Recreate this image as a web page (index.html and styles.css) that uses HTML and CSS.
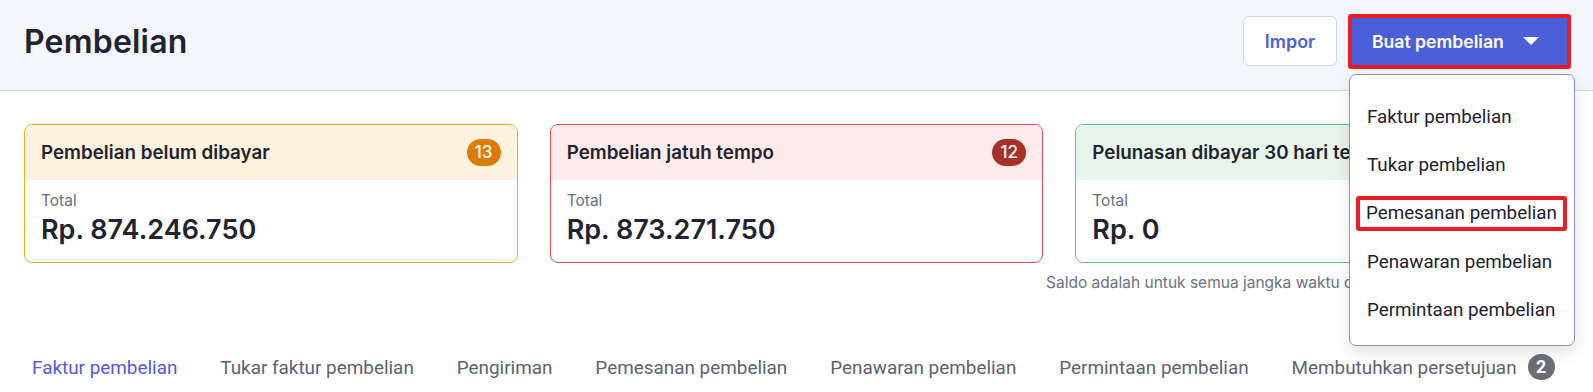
FILE: index.html
```html
<!DOCTYPE html>
<html lang="id">
<head>
    <meta charset="UTF-8">
    <meta name="viewport" content="width=device-width, initial-scale=1.0">
    <title>Pembelian</title>
    <link rel="stylesheet" href="styles.css">
</head>
<body>

    <div class="page-header">
        <h1>Pembelian</h1>
        <div class="actions">
            <button class="btn-import">Impor</button>
            <div class="create-wrap">
                <button class="btn-create">
                    Buat pembelian
                    <svg class="caret" width="16" height="8" viewBox="0 0 16 8"><path d="M0 0 H16 L8 8 Z" fill="#fff"/></svg>
                </button>
                <ul class="dropdown">
                    <li>Faktur pembelian</li>
                    <li>Tukar pembelian</li>
                    <li><span class="marked">Pemesanan pembelian</span></li>
                    <li>Penawaran pembelian</li>
                    <li>Permintaan pembelian</li>
                </ul>
            </div>
        </div>
    </div>

    <div class="summary">
        <div class="card card-yellow">
            <div class="card-head">
                <span>Pembelian belum dibayar</span>
                <span class="count">13</span>
            </div>
            <div class="card-body">
                <div class="label">Total</div>
                <div class="amount">Rp. 874.246.750</div>
            </div>
        </div>
        <div class="card card-red">
            <div class="card-head">
                <span>Pembelian jatuh tempo</span>
                <span class="count">12</span>
            </div>
            <div class="card-body">
                <div class="label">Total</div>
                <div class="amount">Rp. 873.271.750</div>
            </div>
        </div>
        <div class="card card-green">
            <div class="card-head">
                <span>Pelunasan dibayar 30 hari terakhir</span>
            </div>
            <div class="card-body">
                <div class="label">Total</div>
                <div class="amount">Rp. 0</div>
            </div>
        </div>
    </div>
    <p class="note">Saldo adalah untuk semua jangka waktu dalam mata uang dasar (IDR)</p>

    <div class="tabs">
        <a class="tab active">Faktur pembelian</a>
        <a class="tab">Tukar faktur pembelian</a>
        <a class="tab">Pengiriman</a>
        <a class="tab">Pemesanan pembelian</a>
        <a class="tab">Penawaran pembelian</a>
        <a class="tab">Permintaan pembelian</a>
        <a class="tab">Membutuhkan persetujuan <span class="tab-count">2</span></a>
    </div>

</body>
</html>
```

FILE: styles.css
```css
body {
    font-family: Inter, "Noto Sans", sans-serif;
    background-color: #fff;
    color: #1f2430;
    margin: 0;
    padding: 0;
}
.page-header {
    display: flex;
    align-items: center;
    justify-content: space-between;
    height: 91px;
    box-sizing: border-box;
    padding: 0 22px 8px 24px;
    background-color: #f3f6fa;
    border-bottom: 1px solid #d5dae3;
}
h1 {
    margin: 0;
    font-size: 32px;
    font-weight: 600;
    letter-spacing: 0.2px;
}
.actions {
    display: flex;
    align-items: center;
    gap: 11px;
}
.btn-import {
    width: 94px;
    height: 50px;
    background-color: #fff;
    border: 1px solid #d3d8e0;
    border-radius: 6px;
    color: #4c5fdb;
    font-family: inherit;
    font-size: 18px;
    font-weight: 600;
}
.create-wrap {
    position: relative;
}
.btn-create {
    display: flex;
    align-items: center;
    gap: 19px;
    width: 223px;
    height: 55px;
    padding: 0 0 0 20px;
    background-color: #4c5fdb;
    border: 4px solid #ec1c24;
    border-radius: 3px;
    color: #fff;
    font-family: inherit;
    font-size: 17.6px;
    font-weight: 600;
}
.dropdown {
    position: absolute;
    top: 60px;
    left: 1px;
    width: 226px;
    box-sizing: border-box;
    margin: 0;
    padding: 18px 0 11px;
    list-style: none;
    background-color: #fff;
    border: 1px solid #8b93a5;
    border-radius: 7px;
    box-shadow: 0 6px 16px rgba(0,0,0,0.12);
    z-index: 5;
}
.dropdown li {
    display: flex;
    align-items: center;
    height: 48.4px;
    padding-left: 17px;
    font-family: Roboto, sans-serif;
    font-size: 18.8px;
    color: #1d2231;
}
.dropdown .marked {
    display: inline-block;
    margin-left: -11px;
    padding: 0 6px;
    line-height: 27px;
    border: 4px solid #ec1c24;
    border-radius: 3px;
}
.summary {
    display: grid;
    grid-template-columns: repeat(3, 1fr);
    gap: 32px;
    margin: 33px 24px 0;
}
.card {
    border: 1px solid;
    border-radius: 8px;
    overflow: hidden;
    height: 139px;
    box-sizing: border-box;
}
.card-head {
    display: flex;
    align-items: center;
    justify-content: space-between;
    height: 55px;
    padding: 0 16px;
    font-size: 18.8px;
    font-weight: 600;
    white-space: nowrap;
}
.count {
    min-width: 34px;
    height: 27px;
    line-height: 27px;
    border-radius: 14px;
    text-align: center;
    color: #fff;
    font-size: 17px;
    font-weight: 500;
}
.card-body {
    padding: 10px 16px;
}
.label {
    font-size: 15.5px;
    color: #687180;
    line-height: 22px;
}
.amount {
    font-size: 27px;
    font-weight: 600;
    line-height: 36px;
}
.card-yellow { border-color: #e5b320; }
.card-yellow .card-head { background-color: #fcf2dd; }
.card-yellow .count { background-color: #dd7c05; }
.card-red { border-color: #e14f4c; }
.card-red .card-head { background-color: #fdeaea; }
.card-red .count { background-color: #a9302a; }
.card-green { border-color: #6cc27a; }
.card-green .card-head { background-color: #e8f5ea; }
.note {
    margin: 10px 37px 0 24px;
    text-align: right;
    font-size: 15.5px;
    color: #6b7280;
}
.tabs {
    display: flex;
    align-items: center;
    gap: 42.9px;
    margin-top: 62px;
    padding-left: 32px;
    font-family: Roboto, sans-serif;
    font-size: 18.9px;
}
.tab {
    display: flex;
    align-items: center;
    gap: 11px;
    color: #5d6370;
}
.tab.active {
    color: #5359e0;
}
.tab-count {
    display: inline-block;
    width: 27px;
    height: 26px;
    line-height: 26px;
    border-radius: 13px;
    background-color: #6b6d76;
    color: #fff;
    text-align: center;
    font-weight: 700;
    font-size: 18px;
}
```
